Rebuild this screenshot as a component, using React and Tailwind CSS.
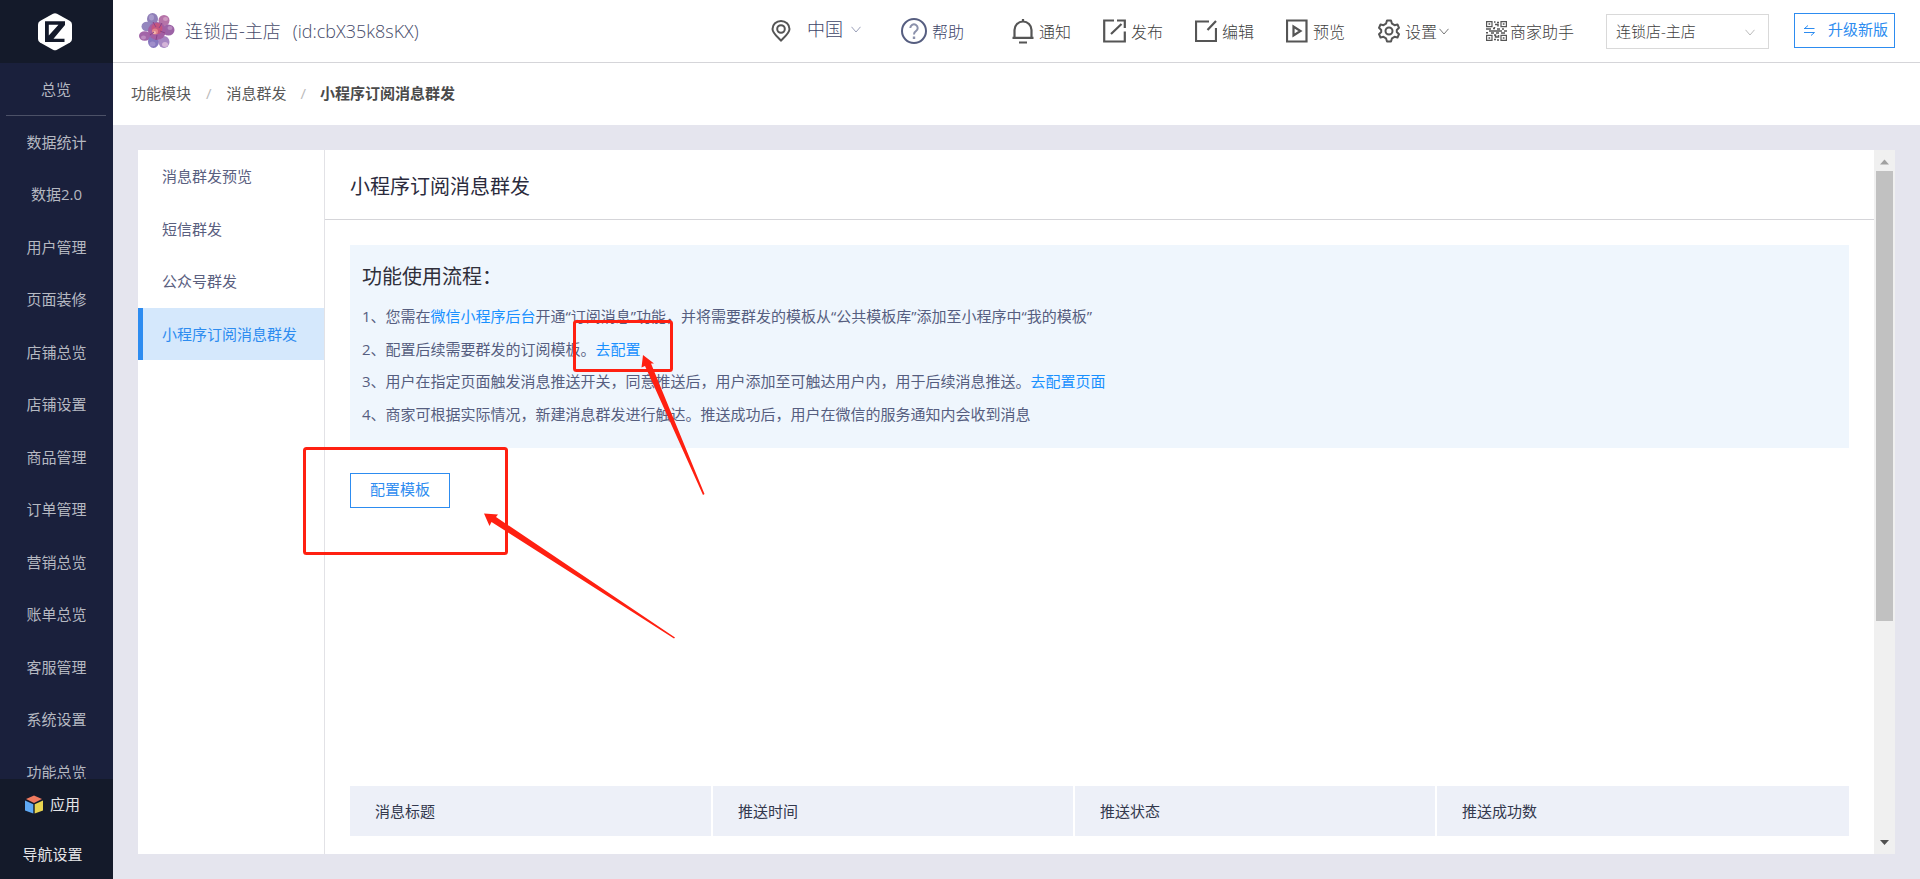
import { useState } from "react";

const sideMenus = [
  "数据统计",
  "数据2.0",
  "用户管理",
  "页面装修",
  "店铺总览",
  "店铺设置",
  "商品管理",
  "订单管理",
  "营销总览",
  "账单总览",
  "客服管理",
  "系统设置",
  "功能总览",
];

const subMenus = ["消息群发预览", "短信群发", "公众号群发", "小程序订阅消息群发"];

const columns = ["消息标题", "推送时间", "推送状态", "推送成功数"];

const Logo = () => (
  <svg width="34" height="38" viewBox="0 0 34 38">
    <path
      d="M15 0.8Q17 -0.3 19 0.8L32 8Q34 9.200 34 11.500V26Q34 28.300 32 29.500L19 36.700Q17 37.800 15 36.700L2 29.500Q0 28.300 0 26V11.500Q0 9.200 2 8Z"
      fill="#fff"
    />
    <path
      d="M7 8.300H27V12L15.500 25.800H26.500V29H7ZM10.800 11.800V22.500L20.500 11.800Z"
      fill="#141a2a"
      fillRule="evenodd"
    />
  </svg>
);

const Flower = () => (
  <svg width="36" height="36" viewBox="0 0 36 36">
    <ellipse cx="13.500" cy="6" rx="5.500" ry="6" fill="#8f7fb8" />
    <ellipse cx="25" cy="7.500" rx="5.500" ry="5.500" fill="#b573a8" />
    <ellipse cx="8" cy="13.500" rx="5.500" ry="4.800" fill="#9486be" />
    <ellipse cx="29.500" cy="17" rx="6" ry="5.500" fill="#9c63a6" />
    <ellipse cx="5.800" cy="23" rx="5.800" ry="4.800" fill="#a265a8" />
    <ellipse cx="14.500" cy="28.500" rx="5.500" ry="6.500" fill="#8576bd" />
    <ellipse cx="25" cy="29" rx="5.500" ry="6" fill="#a686c2" />
    <circle cx="18" cy="18" r="9" fill="#a35ea3" />
    <circle cx="18" cy="15.500" r="5.500" fill="#c4557f" />
    <circle cx="16" cy="18.500" r="3" fill="#e0848c" />
    <circle cx="15.500" cy="19.500" r="1.500" fill="#f3b9a9" />
    <ellipse cx="12.500" cy="4.500" rx="2.500" ry="3" fill="#a89bcb" />
    <ellipse cx="26.500" cy="6" rx="2.500" ry="2" fill="#cf9ac2" />
    <ellipse cx="31" cy="15" rx="2.500" ry="2" fill="#b98abf" />
    <ellipse cx="4.500" cy="24.500" rx="2.500" ry="2" fill="#bd8cc0" />
    <ellipse cx="26" cy="31.500" rx="3" ry="2.500" fill="#d4b4d8" />
    <ellipse cx="13.500" cy="31" rx="3" ry="2.500" fill="#a08fcb" />
    <path d="M14 9l3 5M23 10l-3 5M11 22l4-3M26 20l-5-2M17 27l1-5" stroke="#8a4488" strokeWidth="1" />
  </svg>
);

const PinIcon = () => (
  <svg width="20" height="22" viewBox="0 0 20 22" fill="none" stroke="#555" strokeWidth="2">
    <path d="M10 20.500C6 16.500 1.500 13 1.500 9a8.500 8 0 0 1 17 0C18.500 13 14 16.500 10 20.500Z" />
    <circle cx="10" cy="9" r="3.800" />
  </svg>
);

const HelpIcon = () => (
  <svg width="26" height="26" viewBox="0 0 26 26" fill="none" stroke="#565e80" strokeWidth="2">
    <circle cx="13" cy="13" r="12" />
    <path d="M9.300 10a3.700 3.700 0 1 1 5.600 3.200C13.500 14 13 14.700 13 16.500" stroke="#8b91ab" />
    <path d="M13 18.500v2.500" stroke="#8b91ab" strokeWidth="2.400" />
  </svg>
);

const BellIcon = () => (
  <svg width="22" height="25" viewBox="0 0 22 25" fill="none" stroke="#555" strokeWidth="2.200">
    <path d="M11 0V2.500M2.500 18.500V11a8.500 8.500 0 0 1 17 0V18.500M0.500 18.800H21.500M7 23.500H15" />
  </svg>
);

const PublishIcon = () => (
  <svg width="23" height="24" viewBox="0 0 23 24" fill="none" stroke="#555" strokeWidth="2.200">
    <path d="M11 1.500H1.200V22.500H21.800V12.500M14 1.500H21.800V9M8 15L18.500 5" />
  </svg>
);

const EditIcon = () => (
  <svg width="22" height="22" viewBox="0 0 22 22" fill="none" stroke="#555" strokeWidth="2.200">
    <path d="M14 1.500H1V21H21V8M12.500 10L21 1" />
  </svg>
);

const PreviewIcon = () => (
  <svg width="22" height="24" viewBox="0 0 22 24" fill="none" stroke="#555" strokeWidth="2.200">
    <path d="M1 1.500H20.500V22.500H1ZM7.500 7.500V16.500L14.500 12Z" />
  </svg>
);

const GearIcon = () => (
  <svg width="22" height="24" viewBox="0 0 22 24" fill="none" stroke="#555" strokeWidth="2" strokeLinejoin="round">
    <path d="M9 1.500H13L14 4.700L16.500 6.200L19.500 5.500L21 8.800L18.800 11V13L21 15.200L19.500 18.500L16.500 17.800L14 19.300L13 22.500H9L8 19.300L5.500 17.800L2.500 18.500L1 15.200L3.200 13V11L1 8.800L2.500 5.500L5.500 6.200L8 4.700Z" />
    <circle cx="11" cy="12" r="3.500" />
  </svg>
);

const QrIcon = () => (
  <svg width="21" height="20" viewBox="0 0 21 20" fill="none" stroke="#555" strokeWidth="1.200">
    <path d="M0.600 0.600H6V5.600H0.600ZM15 0.600H20.400V5.600H15ZM0.600 14.400H6V19.400H0.600ZM15 14.400H20.400V19.400H15Z" />
    <path
      d="M2.500 3H4.200M16.800 3H18.500M2.500 17H4.200M16.800 17H18.500M8 1H9.500M11 1.500H13M9 3.500H12V5.500M8.500 6V7M0 8H5M7 7.500H9M11 8H14M16 8H18M3 10H16M18 10H21M0 11.800H2M5 12H8M10 12H13M15 12H19M8 14H9.500V16H12.500V14M8 18.500H10M12 18V20"
      strokeWidth="1.500"
    />
  </svg>
);

const Chevron = ({ className }) => (
  <svg className={className} width="10" height="7" viewBox="0 0 10 7" fill="none" stroke="currentColor">
    <path d="M0.500 0.800L5 6L9.500 0.800" />
  </svg>
);

const CubeIcon = () => (
  <svg width="18" height="19" viewBox="0 0 18 19">
    <path d="M9 0.500L17 4L9 8L1 4Z" fill="#ef7a5f" />
    <path d="M0 5.500L8.300 9.300V18.500L0 15.500Z" fill="#5ea9f5" />
    <path d="M18 5.500L9.700 9.300V18.500L18 15.500Z" fill="#e8d450" />
  </svg>
);

const tools = [
  { label: "通知", icon: <BellIcon /> },
  { label: "发布", icon: <PublishIcon /> },
  { label: "编辑", icon: <EditIcon /> },
  { label: "预览", icon: <PreviewIcon /> },
];

const Sidebar = () => (
  <aside className="flex w-[113px] shrink-0 flex-col bg-[#1a203c] text-center text-[15px] leading-normal text-[#b5b8c1]">
    <div className="flex h-[63px] shrink-0 items-center justify-center bg-[#141a2a] pr-1">
      <Logo />
    </div>
    <a href="#" className="ml-[6px] mr-[7px] block shrink-0 border-b border-[#4c5167] pb-[14px] pt-[15px]">
      总览
    </a>
    <nav className="min-h-0 flex-1 overflow-hidden">
      {sideMenus.map((name) => (
        <a key={name} href="#" className="block py-[15px]">
          {name}
        </a>
      ))}
    </nav>
    <div className="shrink-0 bg-[#141a2a] text-[#e4e5e8]">
      <a href="#" className="flex h-[50px] items-center justify-center gap-[7px] pr-2">
        <CubeIcon />
        应用
      </a>
      <a href="#" className="flex h-[50px] items-center justify-center pr-2">
        导航设置
      </a>
    </div>
  </aside>
);

const Header = ({ shop, setShop }) => (
  <header className="flex h-[63px] shrink-0 items-center border-b border-[#d5d5d9] bg-white pl-[26px] pr-[25px] text-[#404040]">
    <Flower />
    <div className="ml-[10px] whitespace-nowrap text-lg font-light text-[#474c6b]">
      连锁店-主店<span className="ml-3">(id:cbX35k8sKX)</span>
    </div>
    <div className="ml-auto flex items-center whitespace-nowrap font-light">
      <PinIcon />
      <button className="ml-4 flex items-center gap-2 pb-1 text-lg text-[#3d4569]">
        中国
        <Chevron className="text-[#9a9fb8]" />
      </button>
      <button className="ml-10 mr-4 flex items-center gap-[5px] text-[#3d4569]">
        <HelpIcon />
        <span className="pt-0.5">帮助</span>
      </button>
      {tools.map((tool) => (
        <button key={tool.label} className="ml-8 flex items-center gap-[5px]">
          {tool.icon}
          <span className="pt-0.5">{tool.label}</span>
        </button>
      ))}
      <button className="ml-[33px] flex items-center gap-[5px]">
        <GearIcon />
        <span className="pt-0.5">设置</span>
        <Chevron className="-ml-[3px] text-[#777]" />
      </button>
      <button className="ml-[37px] flex items-center gap-[3px]">
        <QrIcon />
        <span className="pt-0.5">商家助手</span>
      </button>
      <div className="relative ml-8">
        <select
          aria-label="店铺"
          value={shop}
          onChange={(e) => setShop(e.target.value)}
          className="h-[35px] w-[163px] appearance-none border border-[#d9d9d9] bg-white pl-[9px] text-[15px] text-[#404040]"
        >
          <option>连锁店-主店</option>
        </select>
        <Chevron className="pointer-events-none absolute right-[14px] top-[15px] text-[#bbb]" />
      </div>
      <button className="mb-0.5 ml-[25px] flex h-[35px] w-[101px] items-center justify-between border border-[#2d8cf0] pl-[9px] pr-[6px] text-[15px] font-normal text-[#2d8cf0]">
        <svg width="11" height="11" viewBox="0 0 11 11" fill="none" stroke="currentColor">
          <path d="M0 3.500H10.500M0.500 3.500L4 0.500M0 7.500H10.500M10.500 7.500L7 10.500" />
        </svg>
        <span className="pb-0.5">升级新版</span>
      </button>
    </div>
  </header>
);

const ScrollBar = () => (
  <div className="flex w-[21px] shrink-0 flex-col items-center bg-[#f0f0f0]">
    <svg width="21" height="21" viewBox="0 0 21 21" className="shrink-0">
      <path d="M6 14.500L10.500 9.500L15 14.500Z" fill="#a0a0a0" />
    </svg>
    <div className="min-h-0 w-full flex-1 px-0.5">
      <div className="h-[68%] bg-[#c1c1c1]" />
    </div>
    <svg width="21" height="21" viewBox="0 0 21 21" className="shrink-0">
      <path d="M6 7L10.500 12L15 7Z" fill="#505050" />
    </svg>
  </div>
);

// red marks drawn over the page
const Marks = () => (
  <svg
    className="pointer-events-none absolute left-0 top-0"
    width="720"
    height="660"
    viewBox="0 0 720 660"
    fill="none"
  >
    <rect x="574.500" y="321.500" width="97" height="49" rx="2" stroke="#ff2011" strokeWidth="3" />
    <rect x="304.500" y="448.500" width="202" height="105" rx="2" stroke="#ff2011" strokeWidth="3" />
    <path d="M643 355L654 363.500L651 363.500L704.500 494L703 495L645 366L641.500 367.500Z" fill="#ff2011" />
    <path d="M484 513.500L498 514.500L496 517L675 637.500L674 638.500L491.500 522L489.500 526Z" fill="#ff2011" />
  </svg>
);

const App = () => {
  const [shop, setShop] = useState("连锁店-主店");
  const [active, setActive] = useState("小程序订阅消息群发");

  return (
    <div className="relative flex h-screen overflow-hidden bg-[#e5e5ee] font-['Open_Sans','Noto_Sans_CJK_SC',sans-serif]">
      <Sidebar />

      <div className="flex min-w-0 flex-1 flex-col">
        <Header shop={shop} setShop={setShop} />

        <div className="flex h-[62px] shrink-0 items-center bg-white pb-0.5 pl-[18px] text-[15px] text-[#595959]">
          <a href="#">功能模块</a>
          <span className="mx-[15px] text-[#bbb]">/</span>
          <a href="#">消息群发</a>
          <span className="mx-[14px] text-[#bbb]">/</span>
          <span className="font-bold text-[#4a4a4a]">小程序订阅消息群发</span>
        </div>

        <main className="m-[25px] flex min-h-0 flex-1 bg-white">
          <nav className="w-[187px] shrink-0 border-r border-[#e2e2e6] text-[15px] leading-normal text-[#5a607f]">
            {subMenus.map((name) => (
              <a
                key={name}
                href="#"
                onClick={() => setActive(name)}
                className={
                  name === active
                    ? "block border-l-[5px] border-[#2d8cf0] bg-[#d5e8fc] py-[15px] pl-[19px] text-[#2d8cf0]"
                    : "block py-[15px] pl-6"
                }
              >
                {name}
              </a>
            ))}
          </nav>

          <section className="flex min-w-0 flex-1 flex-col overflow-hidden">
            <h1 className="flex h-[70px] shrink-0 items-center border-b border-[#d5d5d9] pl-[25px] pt-1 text-xl text-[#2b2b3d]">
              小程序订阅消息群发
            </h1>

            <div className="mx-[25px] mt-[25px] h-[203px] shrink-0 bg-[#eff6fd] p-3 text-[15px] leading-normal text-[#565e80]">
              <h2 className="mb-[13px] mt-[5px] text-xl leading-[30px] text-[#2f2f3a]">功能使用流程：</h2>
              <ol className="space-y-[10px]">
                <li>
                  1、您需在
                  <a href="#" className="text-[#1890ff]">微信小程序后台</a>
                  开通“订阅消息”功能，并将需要群发的模板从“公共模板库”添加至小程序中“我的模板”
                </li>
                <li>
                  2、配置后续需要群发的订阅模板。
                  <a href="#" className="text-[#1890ff]">去配置</a>
                </li>
                <li>
                  3、用户在指定页面触发消息推送开关，同意推送后，用户添加至可触达用户内，用于后续消息推送。
                  <a href="#" className="text-[#1890ff]">去配置页面</a>
                </li>
                <li>4、商家可根据实际情况，新建消息群发进行触达。推送成功后，用户在微信的服务通知内会收到消息</li>
              </ol>
            </div>

            <button className="ml-[25px] mt-[25px] h-[35px] w-[100px] shrink-0 border border-[#2d8cf0] pb-0.5 text-[15px] text-[#2d8cf0]">
              配置模板
            </button>

            <div className="mb-[18px] mt-auto shrink-0 px-[25px]">
              <table className="w-full table-fixed text-[15px] text-[#33384d]">
                <thead>
                  <tr className="h-[50px]">
                    {columns.map((name) => (
                      <th
                        key={name}
                        className="w-[362px] border-r-2 border-white bg-[#edf0f8] pl-[25px] text-left font-normal last:w-auto last:border-r-0"
                      >
                        {name}
                      </th>
                    ))}
                  </tr>
                </thead>
              </table>
            </div>
          </section>

          <ScrollBar />
        </main>
      </div>

      <Marks />
    </div>
  );
};

export default App;
